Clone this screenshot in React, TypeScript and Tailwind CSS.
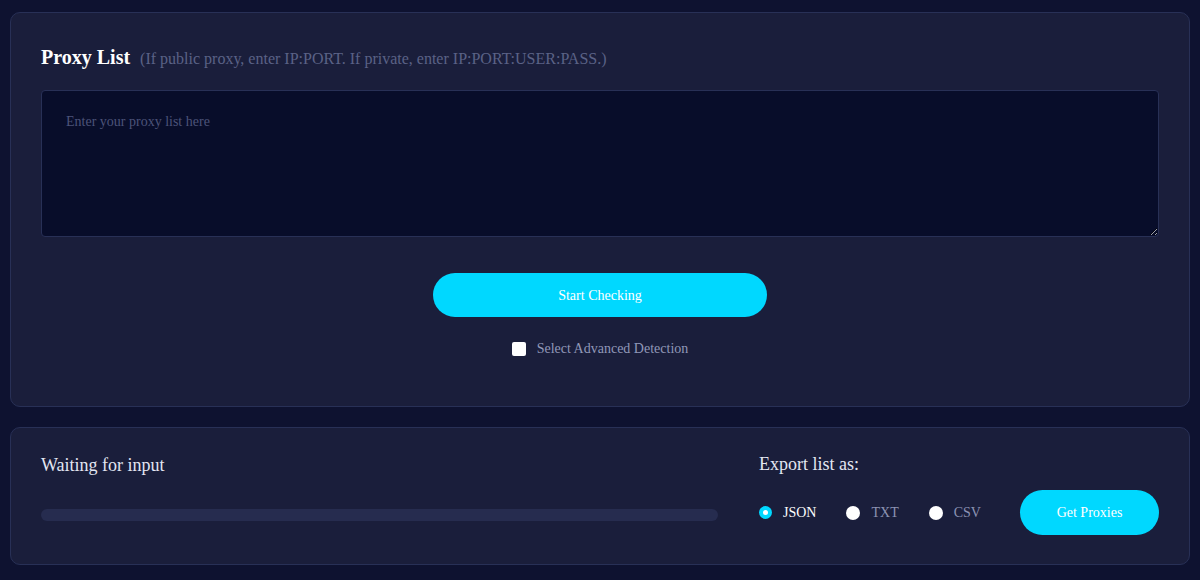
import { useState } from 'react';

const serif = { fontFamily: '"Liberation Serif", "Times New Roman", serif' };

export default function App() {
  const [format, setFormat] = useState('json');
  const [advanced, setAdvanced] = useState(false);
  const formats = [
    { id: 'json', label: 'JSON' },
    { id: 'txt', label: 'TXT' },
    { id: 'csv', label: 'CSV' },
  ];

  return (
    <div className="min-h-[580px] bg-[#0e1230] px-[10px] pt-[12px] pb-[14px]" style={serif}>
      <div className="rounded-[10px] border border-[#283056] bg-[#1a1e3b] px-[30px] pt-[30px] pb-[47px]">
        <div className="flex items-baseline gap-[10px]">
          <h2 className="text-[20px] leading-[28px] font-bold text-white">Proxy List</h2>
          <span className="text-[16px] leading-[28px] text-[#5b6286]">(If public proxy, enter IP:PORT. If private, enter IP:PORT:USER:PASS.)</span>
        </div>
        <textarea
          className="mt-[17px] block h-[147px] w-full rounded-[4px] border border-[#283056] bg-[#080d2a] px-[24px] py-[20px] text-[14px] text-white outline-none placeholder:text-[#4c5379]"
          placeholder="Enter your proxy list here"
        />
        <div className="mt-[36px] flex flex-col items-center">
          <button className="h-[44px] w-[334px] rounded-full bg-[#00d8ff] text-[14px] text-white">
            Start Checking
          </button>
          <label className="mt-[21px] flex h-[21px] items-center gap-[11px] text-[14px] text-[#9198b8]">
            <input
              type="checkbox"
              checked={advanced}
              onChange={() => setAdvanced(!advanced)}
              className="h-[14px] w-[14px] appearance-none rounded-[2px] bg-white"
            />
            Select Advanced Detection
          </label>
        </div>
      </div>

      <div className="mt-[20px] flex items-end gap-[41px] rounded-[10px] border border-[#283056] bg-[#1a1e3b] px-[30px] pt-[24px] pb-[29px]">
        <div className="flex-1">
          <div className="text-[18px] leading-[24px] text-[#e3e6f2]">Waiting for input</div>
          <div className="mt-[32px] mb-[14px] h-[12px] w-full rounded-full bg-[#262c4f]" />
        </div>
        <div className="w-[400px]">
          <div className="text-[18px] leading-[24px] text-[#e3e6f2]">Export list as:</div>
          <div className="mt-[14px] flex items-center">
            {formats.map((f) => (
              <label
                key={f.id}
                onClick={() => setFormat(f.id)}
                className="mr-[30px] flex cursor-pointer items-center gap-[11px] text-[14px]"
              >
                {format === f.id ? (
                  <span className="flex h-[13px] w-[13px] items-center justify-center rounded-full bg-[#00d8ff]">
                    <span className="h-[5px] w-[5px] rounded-full bg-white" />
                  </span>
                ) : (
                  <span className="h-[14px] w-[14px] rounded-full bg-white" />
                )}
                <span className={format === f.id ? 'text-white' : 'text-[#8c93b3]'}>{f.label}</span>
              </label>
            ))}
            <button className="ml-auto h-[45px] w-[139px] rounded-full bg-[#00d8ff] text-[14px] text-white">
              Get Proxies
            </button>
          </div>
        </div>
      </div>
    </div>
  );
}
